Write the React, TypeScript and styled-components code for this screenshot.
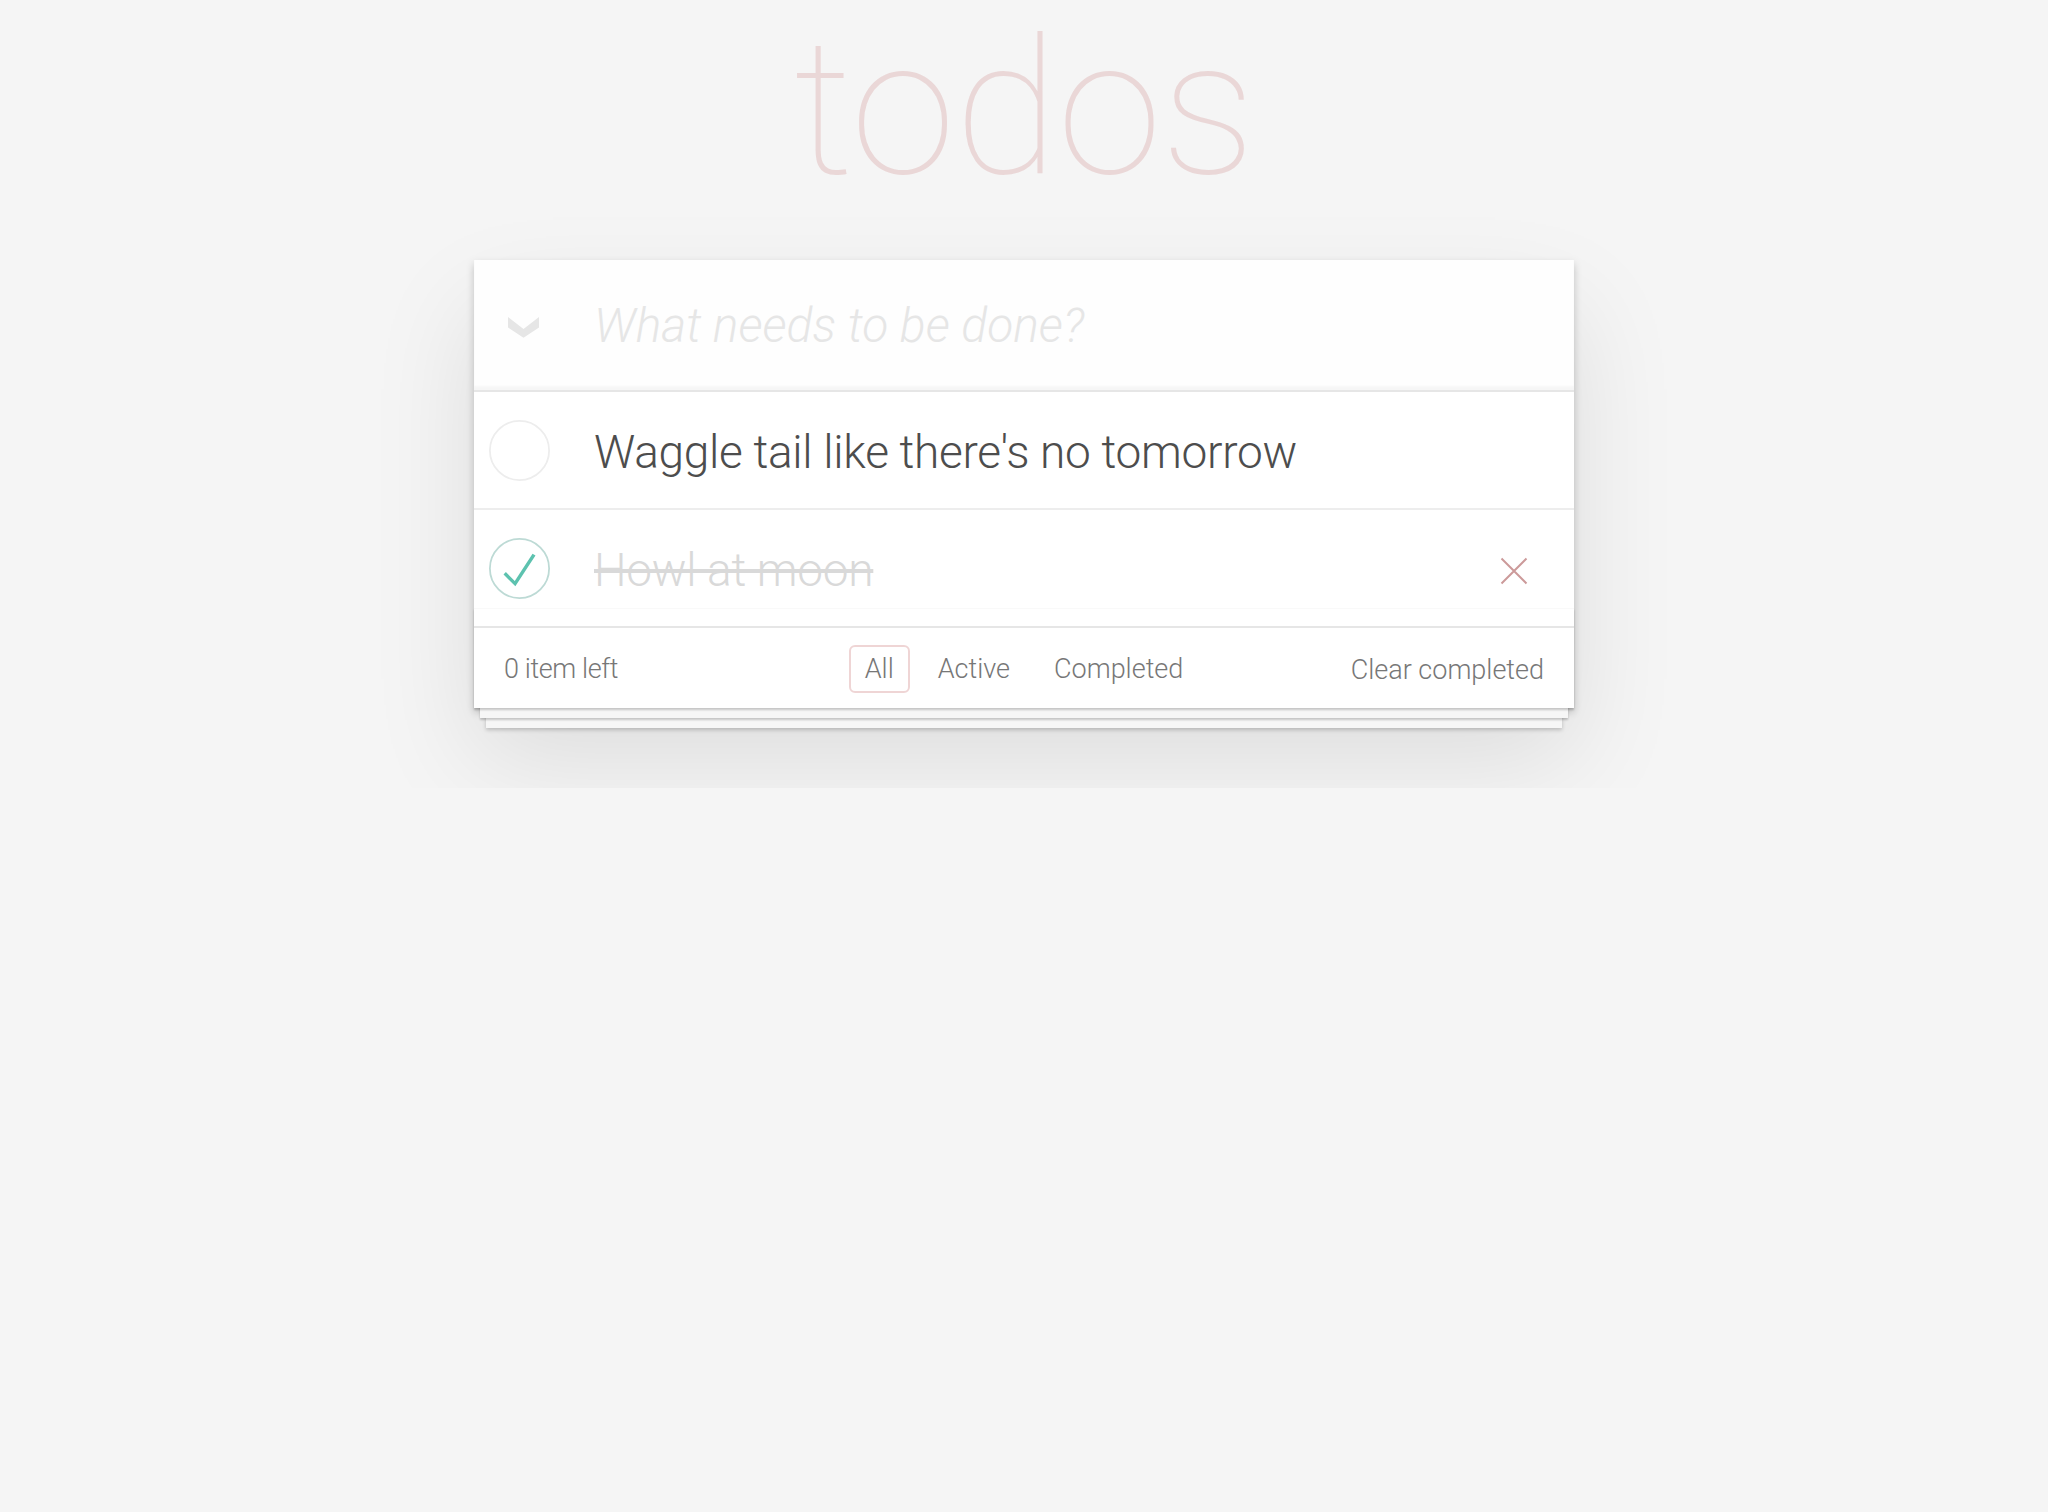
import React from 'react';
import styled, { createGlobalStyle } from 'styled-components';

const GlobalStyle = createGlobalStyle`
  html, body { margin: 0; padding: 0; }
  body {
    background: #f5f5f5;
    font-family: Roboto, "Helvetica Neue", "Liberation Sans", sans-serif;
    font-weight: 300;
    font-size: 28px;
    line-height: 39.2px;
    color: #4d4d4d;
    -webkit-font-smoothing: antialiased;
  }
`;

const Page = styled.section`
  width: 1100px;
  margin: 0 auto 80px;
`;

const Title = styled.h1`
  box-sizing: border-box;
  height: 260px;
  margin: 0;
  padding-top: 8px;
  font-size: 190px;
  line-height: 200px;
  font-weight: 100;
  letter-spacing: -1px;
  text-align: center;
  color: rgba(175, 47, 47, 0.15);
  text-rendering: optimizeLegibility;
`;

const Panel = styled.div`
  position: relative;
  background: #fff;
  box-shadow: 0 4px 8px 0 rgba(0, 0, 0, 0.2), 0 50px 100px 0 rgba(0, 0, 0, 0.1);
`;

const Header = styled.header`
  display: flex;
  align-items: center;
  height: 130px;
  background: rgba(0, 0, 0, 0.003);
  box-shadow: inset 0 -4px 2px rgba(0, 0, 0, 0.03);
`;

const ToggleAll = styled.button`
  flex: none;
  box-sizing: border-box;
  width: 120px;
  height: 100%;
  padding: 4px 0 0 34px;
  margin: 0;
  border: 0;
  background: none;
  display: flex;
  align-items: center;
  cursor: pointer;
`;

const NewTodo = styled.input`
  flex: 1;
  min-width: 0;
  border: 0;
  outline: none;
  background: transparent;
  padding: 0 32px 0 0;
  margin: 0;
  font-family: inherit;
  font-weight: 300;
  font-size: 48px;
  line-height: 67.2px;
  height: 67.2px;
  color: #4d4d4d;
  &::placeholder {
    font-style: italic;
    font-weight: 300;
    color: #e6e6e6;
  }
`;

const List = styled.ul`
  margin: 0;
  padding: 0;
  list-style: none;
  border-top: 2px solid #e6e6e6;
`;

const Item = styled.li<{ $last?: boolean }>`
  display: flex;
  align-items: center;
  font-size: 46px;
  letter-spacing: -0.3px;
  border-bottom: ${(p) => (p.$last ? 'none' : '2px solid #ededed')};
`;

const Toggle = styled.span`
  flex: none;
  box-sizing: border-box;
  width: 120px;
  padding-left: 15px;
  display: flex;
  align-items: center;
`;

const Label = styled.label<{ $done?: boolean }>`
  flex: 1;
  padding: 32px 0 28px;
  line-height: 56px;
  color: ${(p) => (p.$done ? '#d9d9d9' : '#4d4d4d')};
  text-decoration: ${(p) => (p.$done ? 'line-through' : 'none')};
`;

const Destroy = styled.button`
  flex: none;
  width: 80px;
  height: 80px;
  margin: 5px 20px 0 0;
  padding: 0;
  border: 0;
  background: none;
  display: flex;
  align-items: center;
  justify-content: center;
  cursor: pointer;
`;

const Footer = styled.footer`
  position: relative;
  display: grid;
  grid-template-columns: 1fr auto 1fr;
  align-items: start;
  height: 40px;
  padding: 22px 30px 18px;
  border-top: 2px solid #e6e6e6;
  color: #777;
  font-size: 27px;
  line-height: 39.2px;
  &::before {
    content: '';
    position: absolute;
    left: 0;
    right: 0;
    bottom: 0;
    height: 100px;
    pointer-events: none;
    border-top: 1px solid rgba(0, 0, 0, 0.025);
    box-sizing: border-box;
    box-shadow: 0 2px 2px rgba(0, 0, 0, 0.2), 0 16px 0 -6px #f6f6f6,
      0 18px 2px -6px rgba(0, 0, 0, 0.2), 0 32px 0 -12px #f6f6f6,
      0 34px 4px -12px rgba(0, 0, 0, 0.2);
  }
`;

const Count = styled.span`
  justify-self: start;
  text-align: left;
  letter-spacing: -0.4px;
  strong {
    font-weight: 300;
  }
`;

const Filters = styled.ul`
  margin: 0;
  padding: 0;
  list-style: none;
  display: block;
  white-space: nowrap;
`;

const FilterItem = styled.li`
  display: inline;
`;

const FilterLink = styled.a<{ $selected?: boolean }>`
  color: inherit;
  margin: 6px;
  padding: 6px 14px;
  text-decoration: none;
  border: 2px solid
    ${(p) => (p.$selected ? 'rgba(175, 47, 47, 0.2)' : 'transparent')};
  border-radius: 6px;
`;

const Clear = styled.button`
  justify-self: end;
  margin: 0;
  padding: 0;
  border: 0;
  background: none;
  font: inherit;
  font-size: 27px;
  font-weight: 300;
  line-height: 40px;
  color: #777;
  cursor: pointer;
`;

const Chevron = () => (
  <svg width="31" height="21" viewBox="0 0 31 21">
    <polygon points="0,0 15.5,12 31,0 31,10.5 15.5,20.7 0,10.5" fill="#e6e6e6" />
  </svg>
);

const Check = ({ done }: { done: boolean }) => (
  <svg width="61" height="61" viewBox="-1.5 -1.5 103 103">
    <circle cx="50" cy="50" r="50" fill="none" stroke={done ? '#bddad5' : '#ededed'} strokeWidth="3" />
    {done && <path d="M72 25L42 71 27 56l-4 4 20 20 34-52z" fill="#5dc2af" />}
  </svg>
);

const Cross = () => (
  <svg width="28" height="28" viewBox="0 0 28 28">
    <path d="M1.5 1.5L26.5 26.5M26.5 1.5L1.5 26.5" stroke="#cc9a9a" strokeWidth="2" />
  </svg>
);

const todos = [
  { title: "Waggle tail like there's no tomorrow", done: false },
  { title: 'Howl at moon', done: true },
];

export default function App() {
  return (
    <>
      <GlobalStyle />
      <Page>
        <Title>todos</Title>
        <Panel>
          <Header>
            <ToggleAll aria-label="Mark all as complete">
              <Chevron />
            </ToggleAll>
            <NewTodo placeholder="What needs to be done?" />
          </Header>
          <List>
            {todos.map((t, i) => (
              <Item key={t.title} $last={i === todos.length - 1}>
                <Toggle>
                  <Check done={t.done} />
                </Toggle>
                <Label $done={t.done}>{t.title}</Label>
                {t.done && (
                  <Destroy aria-label="Delete">
                    <Cross />
                  </Destroy>
                )}
              </Item>
            ))}
          </List>
          <Footer>
            <Count>
              <strong>0</strong> item left
            </Count>
            <Filters>
              <FilterItem>
                <FilterLink href="#/" $selected>
                  All
                </FilterLink>
              </FilterItem>
              <FilterItem>
                <FilterLink href="#/active">Active</FilterLink>
              </FilterItem>
              <FilterItem>
                <FilterLink href="#/completed">Completed</FilterLink>
              </FilterItem>
            </Filters>
            <Clear>Clear completed</Clear>
          </Footer>
        </Panel>
      </Page>
    </>
  );
}
